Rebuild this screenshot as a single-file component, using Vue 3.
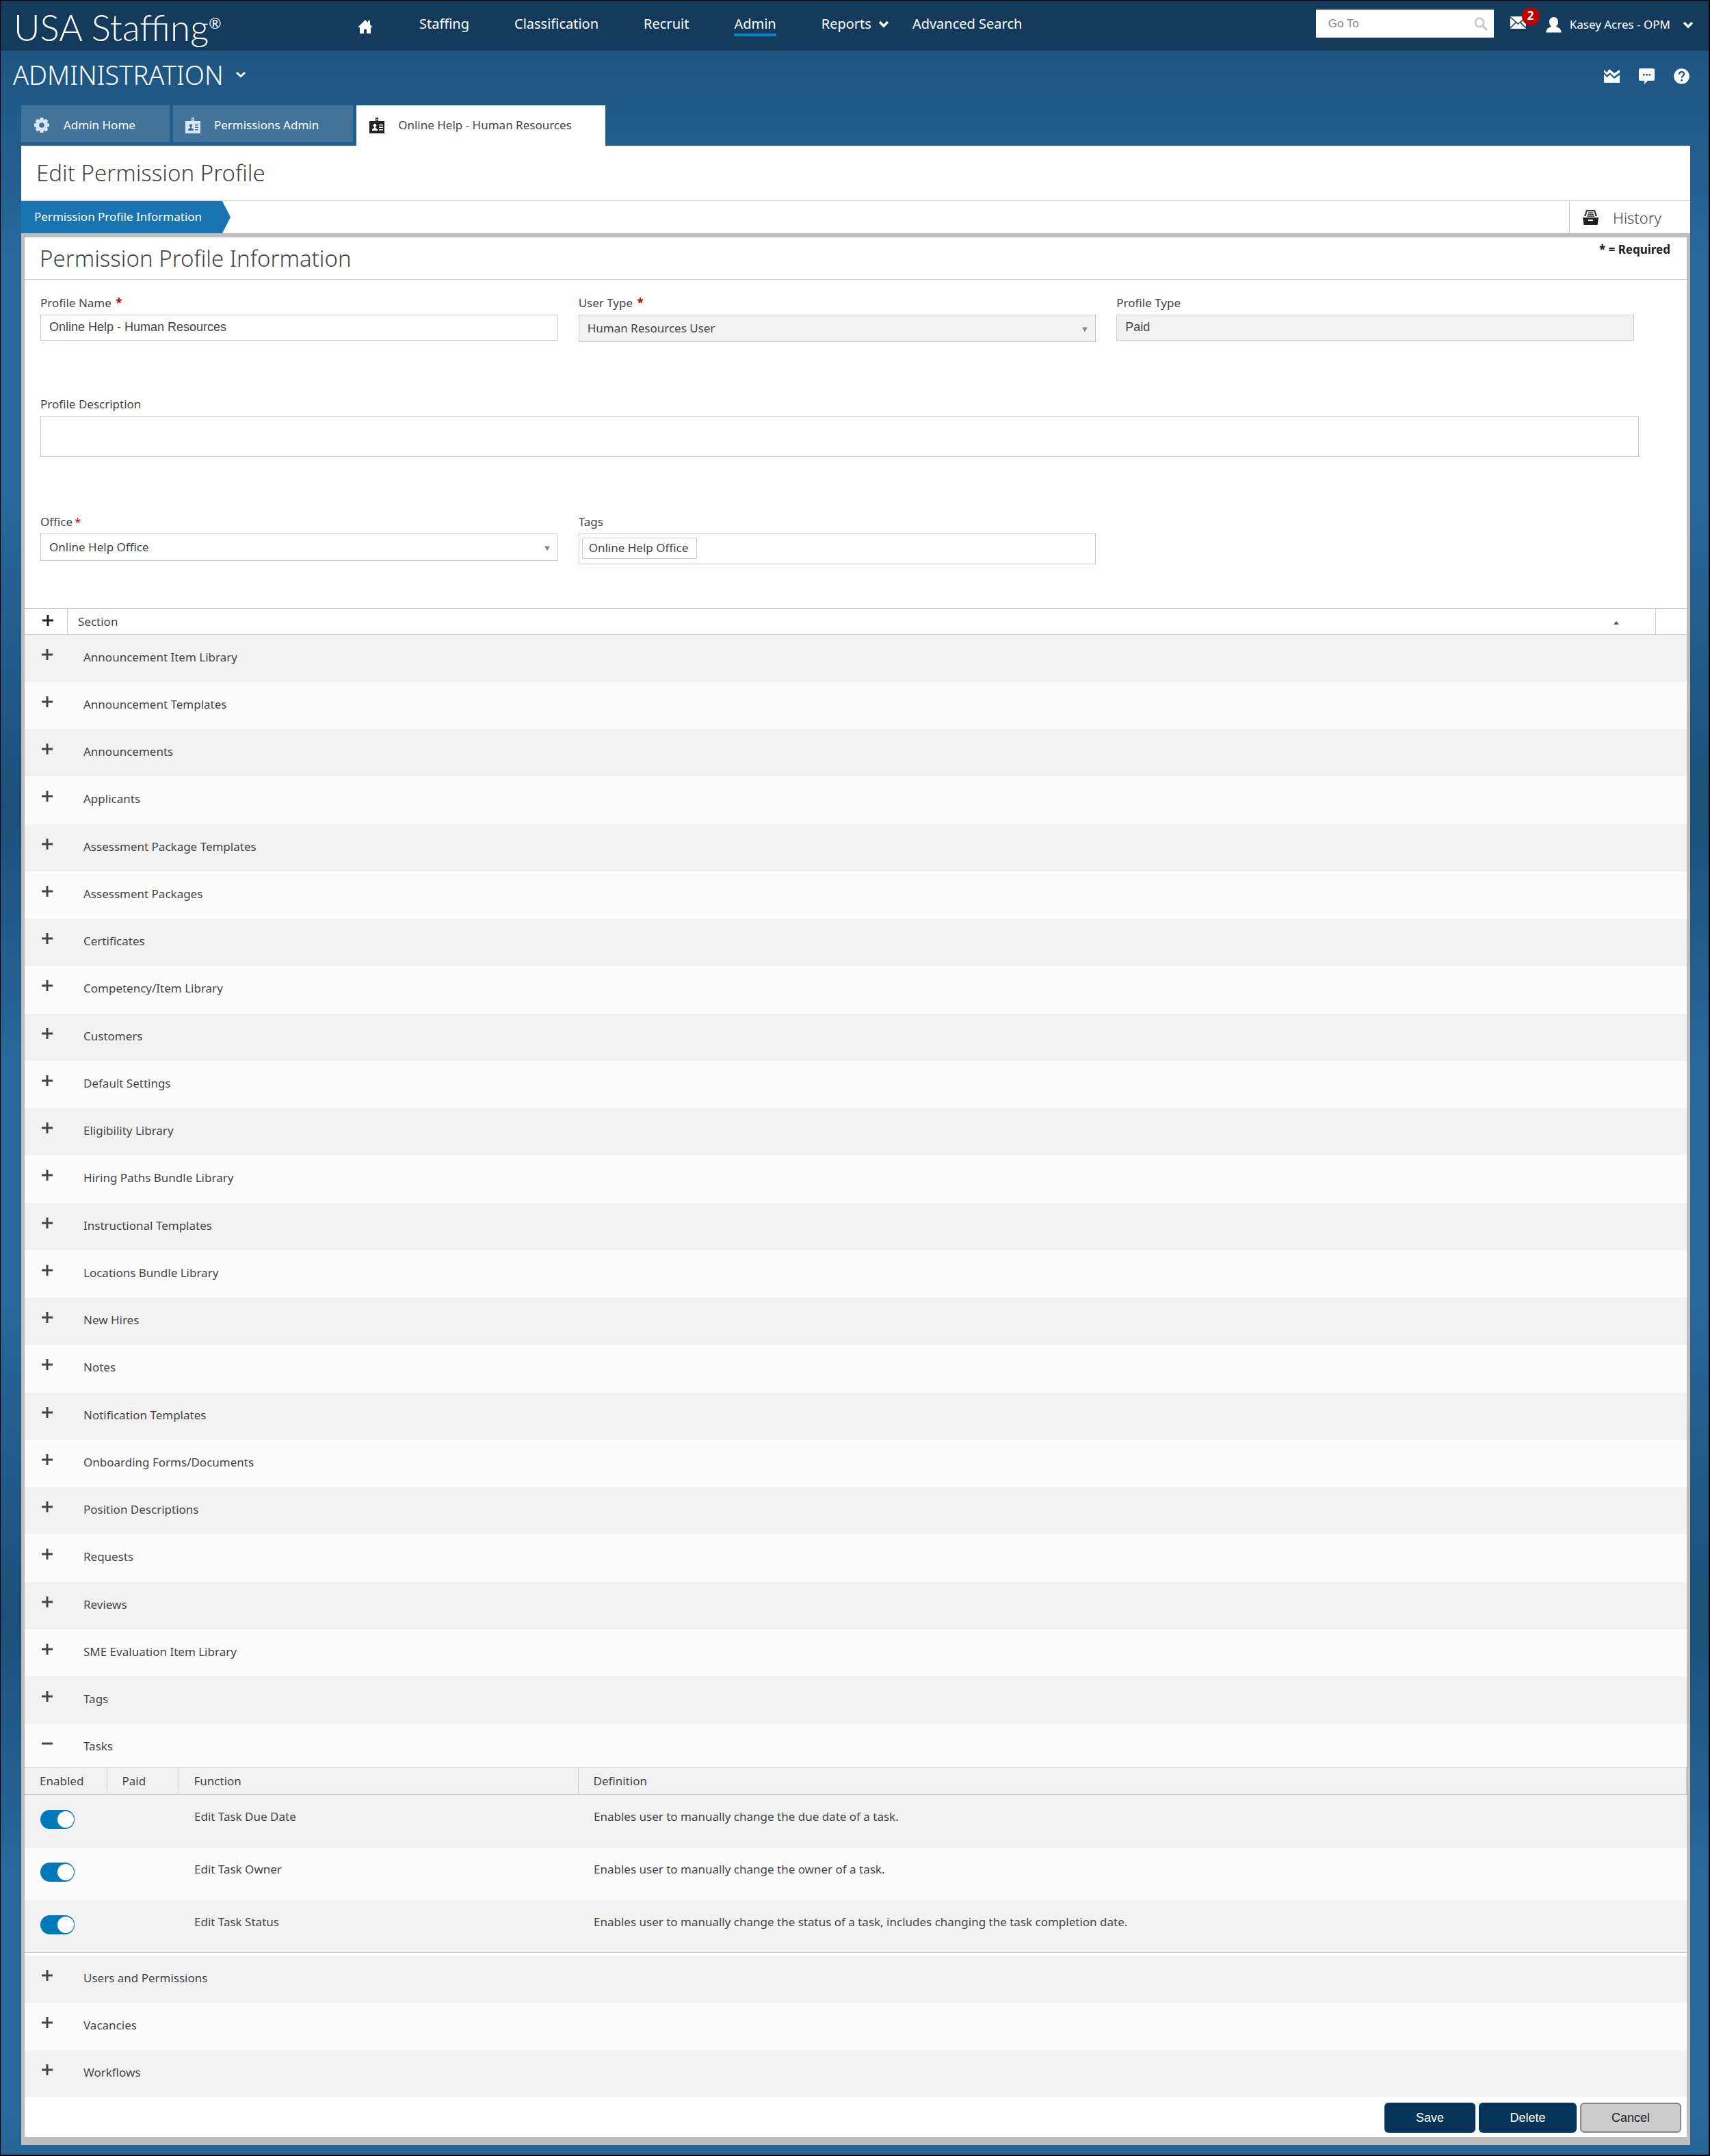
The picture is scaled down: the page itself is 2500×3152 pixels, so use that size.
<script setup>
import { reactive, ref } from 'vue'

const navLinks = ['Staffing', 'Classification', 'Recruit', 'Admin']

const before = [
  'Announcement Item Library',
  'Announcement Templates',
  'Announcements',
  'Applicants',
  'Assessment Package Templates',
  'Assessment Packages',
  'Certificates',
  'Competency/Item Library',
  'Customers',
  'Default Settings',
  'Eligibility Library',
  'Hiring Paths Bundle Library',
  'Instructional Templates',
  'Locations Bundle Library',
  'New Hires',
  'Notes',
  'Notification Templates',
  'Onboarding Forms/Documents',
  'Position Descriptions',
  'Requests',
  'Reviews',
  'SME Evaluation Item Library',
  'Tags',
]
const after = ['Users and Permissions', 'Vacancies', 'Workflows']

const tasks = reactive([
  { name: 'Edit Task Due Date', text: 'Enables user to manually change the due date of a task.', on: true },
  { name: 'Edit Task Owner', text: 'Enables user to manually change the owner of a task.', on: true },
  {
    name: 'Edit Task Status',
    text: 'Enables user to manually change the status of a task, includes changing the task completion date.',
    on: true,
  },
])

const profileName = ref('Online Help - Human Resources')
const description = ref('')
</script>

<template>
  <div class="page">
    <header class="topbar">
      <div class="brand">USA Staffing<sup>®</sup></div>
      <nav class="nav">
        <a href="#" class="home" aria-label="Home">
          <svg width="22" height="22" viewBox="0 0 22 22"><path fill="#fff" d="M11 1 0 12h3v9h6v-6h4v6h6v-9h3l-4-4V2h-3v3z" /></svg>
        </a>
        <a v-for="l in navLinks" :key="l" href="#" :class="{ current: l === 'Admin' }">{{ l }}</a>
        <a href="#" class="reports">Reports
          <svg width="16" height="11" viewBox="0 0 16 11"><path d="M2 2l6 6 6-6" fill="none" stroke="#fff" stroke-width="3.4" /></svg>
        </a>
        <a href="#">Advanced Search</a>
      </nav>
      <div class="tools">
        <label class="search">
          <input type="text" placeholder="Go To" aria-label="Go To" />
          <svg width="20" height="20" viewBox="0 0 20 20"><circle cx="8" cy="8" r="6.2" fill="none" stroke="#c8c8c8" stroke-width="2.6" /><path d="M12.5 12.5 18 18" stroke="#c8c8c8" stroke-width="3.4" stroke-linecap="round" /></svg>
        </label>
        <a href="#" class="mail" aria-label="Messages">
          <svg width="23" height="18" viewBox="0 0 23 18"><path fill="#fff" d="M0 0h23v18H0z" /><path d="M0 1l11.500 10L23 1M0 17l8-8M23 17l-8-8" fill="none" stroke="#143b5c" stroke-width="1.600" /></svg>
          <span class="badge">2</span>
        </a>
        <a href="#" class="user">
          <svg width="23" height="23" viewBox="0 0 23 23"><path fill="#fff" d="M11.500 0C7.500 0 5 3 5 7c0 3 1.300 5.500 3 6.800L3.500 16Q1 17.500 0 22.500h23Q22 17.500 19.500 16L15 13.800C16.700 12.500 18 10 18 7c0-4-2.500-7-6.500-7z" /></svg>
          <span>Kasey Acres - OPM</span>
          <svg width="16" height="11" viewBox="0 0 16 11"><path d="M2 2l6 6 6-6" fill="none" stroke="#fff" stroke-width="3.400" /></svg>
        </a>
      </div>
    </header>

    <div class="titlebar">
      <button type="button" class="area">ADMINISTRATION
        <svg width="16" height="10" viewBox="0 0 16 10"><path d="M2 2l6 5.500L14 2" fill="none" stroke="#fff" stroke-width="2.800" /></svg>
      </button>
      <div class="quick">
        <button type="button" aria-label="Charts">
          <svg width="23" height="20" viewBox="0 0 23 20"><path fill="#fff" d="M0 1l4 4 4-5 7 6 8-5v4l-8 6-6.500-6L4.500 9 0 4.500zM0 7.500 4.500 12 9 8l6 6 8-5.500V20H0z" /></svg>
        </button>
        <button type="button" aria-label="Feedback">
          <svg width="23" height="23" viewBox="0 0 23 23"><path fill="#fff" d="M2 0h19a2 2 0 0 1 2 2v14a2 2 0 0 1-2 2h-8l-5 5v-5H2a2 2 0 0 1-2-2V2a2 2 0 0 1 2-2z" /><path fill="#1d5684" d="M6 8h2.500v2.500H6zM10.300 8h2.500v2.500h-2.500zM14.600 8h2.500v2.500h-2.500z" /></svg>
        </button>
        <button type="button" aria-label="Help">
          <svg width="23" height="23" viewBox="0 0 23 23"><circle cx="11.500" cy="11.500" r="11.300" fill="#fff" /><path d="M8 8.800c0-4.800 7.200-4.600 7.200-.6 0 2.600-3.500 2.800-3.500 5.600" fill="none" stroke="#1d5684" stroke-width="2.200" /><circle cx="11.600" cy="17.200" r="1.500" fill="#1d5684" /></svg>
        </button>
      </div>
    </div>

    <main class="content">
      <nav class="tabs">
        <a href="#" class="tab">
          <svg width="24" height="24" viewBox="0 0 24 24"><g fill="#dbe6ef"><circle cx="12" cy="12" r="9" /><path d="M9.500 1h5v22h-5zM1 9.500h22v5H1z" /><path d="M9.500 1h5v22h-5zM1 9.500h22v5H1z" transform="rotate(45 12 12)" /></g><circle cx="12" cy="12" r="3.800" fill="#41739b" /></svg>
          Admin Home
        </a>
        <a href="#" class="tab">
          <svg width="22" height="23" viewBox="0 0 22 23"><path fill="#dbe6ef" d="M0 5h22v18H0zM9 0h4v6H9z" /><circle cx="11" cy="3" r="1" fill="#41739b" /><circle cx="8" cy="11.500" r="2.200" fill="#41739b" /><path fill="#41739b" d="M7 12h2v3l3 2v2H4v-2l3-2zM14 10h5v1.600h-5zM14 13.500h5v1.600h-5zM14 17h5v1.600h-5z" /></svg>
          Permissions Admin
        </a>
        <a href="#" class="tab active">
          <svg width="22" height="23" viewBox="0 0 22 23"><path fill="#222" d="M0 5h22v18H0zM9 0h4v6H9z" /><circle cx="11" cy="3" r="1" fill="#fff" /><circle cx="8" cy="11.500" r="2.400" fill="#fff" /><path fill="#fff" d="M7 12h2v3l3 2v2H4v-2l3-2zM14 10h6v1.600h-6zM14 13.500h6v1.600h-6zM14 17h6v1.600h-6z" /></svg>
          Online Help - Human Resources
        </a>
      </nav>

      <h1>Edit Permission Profile</h1>

      <div class="steps">
        <a href="#" class="step">Permission Profile Information</a>
        <a href="#" class="history">
          <svg width="23" height="22" viewBox="0 0 23 22"><path fill="#333" d="M5 0h13l3 9h-2.500L16.500 2h-10L4.500 9H2z" /><path d="M8 4h7M7 6.500h9M6 9h11" stroke="#333" stroke-width="1.400" /><path fill="#222" d="M0 11h23l-1.500 11h-20z" /><path fill="#fff" d="M8 14h7v2H8z" /></svg>
          History
        </a>
      </div>

      <section class="panel">
        <div class="panel-head">
          <h2>Permission Profile Information</h2>
          <strong>* = Required</strong>
        </div>

        <form class="form" @submit.prevent>
          <div class="row">
            <div class="field">
              <label for="name">Profile Name <b>*</b></label>
              <input id="name" v-model="profileName" type="text" />
            </div>
            <div class="field">
              <label for="utype">User Type <b>*</b></label>
              <div class="select">
                <select id="utype" disabled><option>Human Resources User</option></select>
                <svg width="8" height="8" viewBox="0 0 10 9"><path fill="#888" d="M0 0h10L5 9z" /></svg>
              </div>
            </div>
            <div class="field">
              <label for="ptype">Profile Type</label>
              <input id="ptype" type="text" value="Paid" disabled />
            </div>
          </div>
          <div class="row wide">
            <div class="field">
              <label for="desc">Profile Description</label>
              <textarea id="desc" v-model="description"></textarea>
            </div>
          </div>
          <div class="row last">
            <div class="field">
              <label for="office">Office<i>*</i></label>
              <div class="select">
                <select id="office"><option>Online Help Office</option></select>
                <svg width="8" height="8" viewBox="0 0 10 9"><path fill="#888" d="M0 0h10L5 9z" /></svg>
              </div>
            </div>
            <div class="field">
              <label for="tags">Tags</label>
              <div class="tags">
                <span class="chip">Online Help Office</span>
                <input id="tags" type="text" />
              </div>
            </div>
          </div>
        </form>

        <div class="list-head">
          <button type="button" class="all" aria-label="Expand all">
            <svg width="16" height="16" viewBox="0 0 16 16"><path d="M8 0v16M0 8h16" stroke="#222" stroke-width="3" /></svg>
          </button>
          <span class="sec">Section</span>
          <svg class="sort" width="8" height="5" viewBox="0 0 8 5"><path fill="#555" d="M4 0l4 5H0z" /></svg>
          <span class="end"></span>
        </div>

        <div class="list">
          <button v-for="s in before" :key="s" type="button" class="item">
            <svg width="16" height="16" viewBox="0 0 16 16"><path d="M8 0v16M0 8h16" stroke="#444" stroke-width="3" /></svg>
            <span>{{ s }}</span>
          </button>
          <button type="button" class="item open">
            <svg width="16" height="16" viewBox="0 0 16 16"><path d="M0 8h16" stroke="#444" stroke-width="3" /></svg>
            <span>Tasks</span>
          </button>
        </div>

        <table>
          <thead>
            <tr><th class="c1">Enabled</th><th class="c2">Paid</th><th class="c3">Function</th><th>Definition</th></tr>
          </thead>
          <tbody>
            <tr v-for="t in tasks" :key="t.name">
              <td class="c1"><input v-model="t.on" type="checkbox" class="toggle" :aria-label="t.name" /></td>
              <td></td>
              <td>{{ t.name }}</td>
              <td>{{ t.text }}</td>
            </tr>
          </tbody>
        </table>

        <div class="list">
          <button v-for="s in after" :key="s" type="button" class="item">
            <svg width="16" height="16" viewBox="0 0 16 16"><path d="M8 0v16M0 8h16" stroke="#444" stroke-width="3" /></svg>
            <span>{{ s }}</span>
          </button>
        </div>

        <div class="actions">
          <button type="button" class="save">Save</button>
          <button type="button" class="delete">Delete</button>
          <button type="button" class="cancel">Cancel</button>
        </div>
      </section>
    </main>
  </div>
</template>

<style>
body {
  margin: 0;
}
</style>

<style scoped>
.page,
.page * {
  box-sizing: border-box;
}
.page {
  min-height: 100vh;
  border: solid #000;
  border-width: 1px 2px 2px 1px;
  padding-bottom: 13px;
  font: 17px/24px 'Noto Sans', sans-serif;
  color: #444;
  background: linear-gradient(#1a5079, #28679b 31%, #28679b 62%, #1a5079) 0 0 / 100% 1180px repeat-y;
}
a {
  color: inherit;
  text-decoration: none;
}
button {
  font: inherit;
  color: inherit;
  border: 0;
  background: none;
  padding: 0;
  text-align: left;
}
svg {
  flex: none;
  display: block;
}

.topbar {
  height: 73px;
  background: #143b5c;
  color: #fff;
  display: flex;
  align-items: flex-start;
}
.brand {
  width: 522px;
  padding-left: 19px;
  font: 300 53px/78px Lato, sans-serif;
  white-space: nowrap;
}
.brand sup {
  font-size: 22px;
  line-height: 1;
  font-weight: 400;
  vertical-align: 18px;
}
.nav {
  display: flex;
  align-items: flex-start;
  gap: 66px;
  font-size: 20px;
  line-height: 28px;
  padding-top: 20px;
  white-space: nowrap;
}
.home {
  padding: 7px 2px 0 0;
}
.current {
  border-bottom: 4px solid #0a84c8;
}
.reports {
  display: flex;
  align-items: center;
  gap: 10px;
  margin-right: -32px;
}
.tools {
  margin-left: auto;
  padding: 13px 22px 0 0;
  display: flex;
}
.search {
  width: 260px;
  height: 41px;
  background: #fff;
  display: flex;
  align-items: center;
  padding: 0 9px 0 18px;
}
.search input {
  flex: 1;
  min-width: 0;
  border: 0;
  padding: 0;
  font: 17px 'Liberation Sans', sans-serif;
}
.search input::placeholder {
  color: #888;
}
.mail {
  position: relative;
  margin: 10px 0 0 24px;
}
.badge {
  position: absolute;
  left: 17px;
  top: -13px;
  width: 26px;
  height: 26px;
  border-radius: 50%;
  background: #c00000;
  font-weight: 700;
  text-align: center;
}
.user {
  display: flex;
  align-items: center;
  gap: 12px;
  height: 24px;
  margin: 10px 0 0 29px;
}
.user svg:last-child {
  margin-left: 6px;
}

.titlebar {
  height: 80px;
  padding: 0 28px 0 18px;
  display: flex;
  justify-content: space-between;
  color: #fff;
}
.area {
  display: flex;
  align-items: center;
  gap: 17px;
  height: 70px;
  font-size: 38px;
  font-weight: 300;
}
.quick {
  display: flex;
  align-items: center;
  gap: 28px;
  height: 74px;
}

.content {
  margin: 0 27px 0 30px;
}
.tabs {
  display: flex;
  gap: 5px;
  height: 59px;
}
.tab {
  display: flex;
  align-items: center;
  gap: 20px;
  height: 54px;
  padding: 4px 50px 0 18px;
  background: #41739b;
  color: #fff;
  white-space: nowrap;
}
.tab.active {
  height: 59px;
  padding: 0 49px 1px 19px;
  background: #fff;
  color: #444;
}
h1,
h2 {
  margin: 0;
  font-weight: 300;
  font-size: 33px;
  line-height: 80px;
}
h1 {
  background: #fff;
  padding-left: 22px;
}
.steps {
  display: flex;
  justify-content: space-between;
  height: 48px;
  background: #fff;
  border-top: 1px solid #ccc;
}
.step {
  width: 306px;
  padding-left: 19px;
  line-height: 46px;
  background: #1a74b2;
  color: #fff;
  clip-path: polygon(0 0, 294px 0, 100% 50%, 294px 100%, 0 100%);
  white-space: nowrap;
}
.history {
  display: flex;
  align-items: center;
  gap: 21px;
  width: 177px;
  padding-left: 19px;
  border-left: 1px solid #ccc;
  font-size: 22px;
  font-weight: 300;
}

.panel {
  border: solid #bdbdbd;
  border-width: 6px 5px 12px 5px;
  background: #fff;
}
.panel-head {
  display: flex;
  justify-content: space-between;
  height: 62px;
  border-bottom: 1px solid #ccc;
  padding: 0 24px 0 22px;
}
h2 {
  line-height: 62px;
}
.panel-head strong {
  line-height: 36px;
  color: #222;
}
.form {
  padding: 20px 77px 0 23px;
}
.row {
  display: grid;
  grid-template-columns: repeat(3, 1fr);
  gap: 30px;
  height: 148px;
}
.row.wide {
  grid-template-columns: 1fr;
  margin-right: -7px;
  height: 172px;
}
.row.last {
  height: 140px;
}
label {
  display: block;
}
.field > label {
  height: 31px;
  line-height: 28px;
}
label b,
label i {
  color: #c00000;
  font-style: normal;
}
label b {
  margin-left: 2px;
}
label i {
  margin-left: 3px;
}
.field > input,
textarea,
select,
.tags {
  display: block;
  width: 100%;
  border: 1px solid #ccc;
  border-radius: 0;
  background: #fff;
  color: #444;
}
.field > input {
  height: 38px;
  padding: 0 12px 2px;
  font: 18px 'Liberation Sans', sans-serif;
}
.field > input:disabled,
select:disabled {
  background: #f2f2f2;
  opacity: 1;
}
textarea {
  height: 60px;
  resize: none;
}
.select {
  position: relative;
}
select {
  appearance: none;
  height: 40px;
  padding: 0 12px;
  font: inherit;
}
.select svg {
  position: absolute;
  right: 12px;
  top: 18px;
}
.tags {
  display: flex;
  height: 45px;
  padding: 5px 4px;
}
.chip {
  height: 31px;
  border: 1px solid #ccc;
  padding: 0 12px 0 9px;
  line-height: 28px;
  white-space: nowrap;
}
.tags input {
  flex: 1;
  border: 0;
}

.list-head {
  display: flex;
  align-items: center;
  height: 39px;
  border: solid #ccc;
  border-width: 1px 0;
}
.all {
  width: 63px;
  height: 37px;
  padding: 0 0 3px 26px;
  border-right: 1px solid #ccc;
}
.sec {
  padding-left: 15px;
  flex: 1;
}
.sort {
  margin: 3px 53px 0 0;
}
.end {
  width: 46px;
  height: 37px;
  border-left: 1px solid #ccc;
}

.item {
  display: flex;
  gap: 45px;
  width: 100%;
  height: 69px;
  padding: 21px 0 0 25px;
  background: #f2f2f2;
}
.item:nth-child(4n) {
  height: 70px;
}
.item:nth-child(even) {
  background: #fcfcfc;
}
.item.open {
  height: 63px;
}

table {
  width: 100%;
  border-collapse: collapse;
  border-bottom: 1px solid #ccc;
  margin-bottom: 4px;
}
th {
  height: 40px;
  padding: 0 0 0 22px;
  text-align: left;
  font-weight: 400;
  background: #f2f2f2;
  border: 1px solid #ccc;
}
th:first-child {
  border-left: 0;
}
td {
  height: 77px;
  padding: 20px 0 0 23px;
  vertical-align: top;
}
tbody tr {
  background: #f2f2f2;
}
tbody tr:nth-child(even) {
  background: #fcfcfc;
}
.c1 {
  width: 120px;
}
.c2 {
  width: 105px;
}
.c3 {
  width: 584px;
}
.toggle {
  appearance: none;
  display: block;
  width: 50px;
  height: 28px;
  margin: 2px 0 0;
  border-radius: 14px;
  background: #999;
  position: relative;
}
.toggle:checked {
  background: #0079b9;
}
.toggle::after {
  content: '';
  position: absolute;
  left: 2px;
  top: 2px;
  width: 24px;
  height: 24px;
  border-radius: 50%;
  background: #fff;
}
.toggle:checked::after {
  left: 25px;
}

.actions {
  display: flex;
  justify-content: flex-end;
  gap: 5px;
  padding: 8px 8px 6px;
}
.actions button {
  height: 44px;
  border-radius: 6px;
  background: #063458;
  color: #fff;
  text-align: center;
  font: 18px 'Liberation Sans', sans-serif;
}
.actions .save {
  width: 133px;
}
.actions .delete {
  width: 143px;
}
.actions .cancel {
  width: 148px;
  border: 2px solid #868686;
  background: #ccc;
  color: #222;
}
</style>
